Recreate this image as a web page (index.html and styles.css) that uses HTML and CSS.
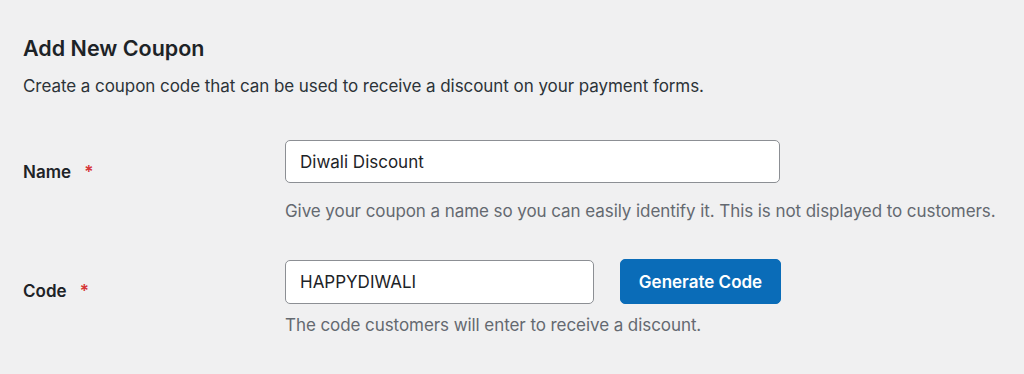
FILE: index.html
```html
<!DOCTYPE html>
<html lang="en">
<head>
<meta charset="utf-8">
<title>Add New Coupon</title>
<link rel="stylesheet" href="styles.css">
</head>
<body>
<div class="page">
  <h2 class="title">Add New Coupon</h2>
  <p class="intro">Create a coupon code that can be used to receive a discount on your payment forms.</p>
  <div class="form">
    <div class="row row-name">
      <label class="label" for="name">Name <span class="req">*</span></label>
      <div class="field">
        <input id="name" class="input input-wide" type="text" value="Diwali Discount">
        <p class="help help-name">Give your coupon a name so you can easily identify it. This is not displayed to customers.</p>
      </div>
    </div>
    <div class="row row-code">
      <label class="label" for="code">Code <span class="req">*</span></label>
      <div class="field">
        <div class="inline">
          <input id="code" class="input input-code" type="text" value="HAPPYDIWALI">
          <button class="btn" type="button">Generate Code</button>
        </div>
        <p class="help help-code">The code customers will enter to receive a discount.</p>
      </div>
    </div>
  </div>
</div>
</body>
</html>
```

FILE: styles.css
```css
html, body {
  margin: 0;
  padding: 0;
  background: #f0f0f1;
}
body {
  font-family: Inter, "Noto Sans", "Liberation Sans", sans-serif;
  color: #1d2327;
  font-size: 17px;
}
.page {
  padding: 33px 23px 0 23px;
}
.title {
  margin: 0;
  font-size: 21.5px;
  line-height: 30px;
  font-weight: 600;
  color: #1d2327;
}
.intro {
  margin: 11px 0 0 0;
  line-height: 24px;
  color: #2c3338;
  letter-spacing: -0.06px;
}
.form {
  margin-top: 42px;
}
.row {
  display: grid;
  grid-template-columns: 262px 1fr;
}
.row-code {
  margin-top: 36px;
}
.label {
  padding-top: 21px;
  line-height: 22px;
  font-weight: 600;
  color: #1d2327;
}
.req {
  color: #d63638;
  margin-left: 9px;
}
.input {
  box-sizing: border-box;
  height: 43px;
  border: 1px solid #8c8f94;
  border-radius: 5px;
  background: #fff;
  padding: 0 14px;
  font: inherit;
  font-size: 17px;
  color: #1d2327;
  outline: none;
}
.input-wide {
  width: 495px;
  display: block;
}
.input-code {
  width: 309px;
  height: 44px;
}
.inline {
  display: flex;
  align-items: center;
  gap: 26px;
}
.btn {
  box-sizing: border-box;
  height: 45px;
  width: 161px;
  border: 1px solid #0a6cb8;
  border-radius: 5px;
  background: #0a6cb8;
  color: #fff;
  font: inherit;
  font-size: 17px;
  font-weight: 600;
  padding: 0;
}
.help {
  margin: 0;
  line-height: 24px;
  color: #646970;
  white-space: nowrap;
  letter-spacing: -0.07px;
}
.help-name {
  margin-top: 16px;
}
.help-code {
  margin-top: 9px;
}
```
